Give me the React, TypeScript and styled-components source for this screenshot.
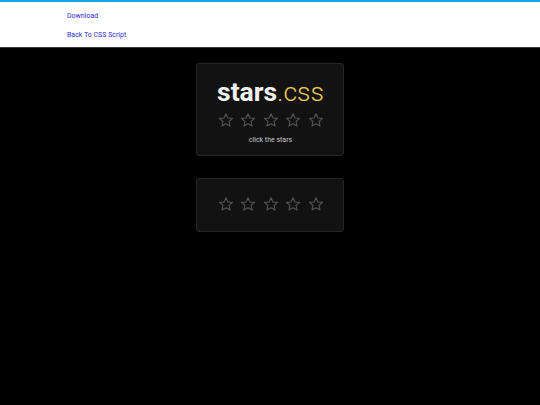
import React from "react";
import styled, { createGlobalStyle } from "styled-components";

const Global = createGlobalStyle`
  html, body { margin: 0; padding: 0; background: #000; }
  body { font-family: Roboto, "Liberation Sans", sans-serif; }
`;

const Header = styled.header`
  background: #fff;
  border-top: 2px solid #1fa1e6;
  border-bottom: 1px solid #3a3a3a;
  height: 45px;
  padding-left: 67px;
  box-sizing: content-box;
  display: flex;
  flex-direction: column;
`;

const NavLink = styled.a`
  font-size: 7px;
  color: #2b2bd6;
  text-decoration: none;
  line-height: 19px;
  display: block;
  &:first-child { margin-top: 5px; }
`;

const Main = styled.main`
  display: flex;
  flex-direction: column;
  align-items: center;
  padding-top: 15px;
  gap: 22px;
`;

const Card = styled.div<{ $h: number; $pt: number }>`
  width: 148px;
  height: ${(p) => p.$h}px;
  padding-top: ${(p) => p.$pt}px;
  padding-left: 1px;
  box-sizing: border-box;
  background: #121212;
  border: 1px solid #262626;
  border-radius: 3px;
  display: flex;
  flex-direction: column;
  align-items: center;
`;

const Title = styled.h1`
  margin: 0;
  font-size: 26.5px;
  line-height: 30px;
  font-weight: 700;
  color: #f2f2f2;
`;

const Ext = styled.span`
  font-weight: 300;
  color: #ebcb55;
`;

const StarRow = styled.div<{ $mt: number }>`
  display: flex;
  gap: 6.5px;
  margin-top: ${(p) => p.$mt}px;
`;

const StarIcon = styled.svg`
  width: 16px;
  height: 16px;
  display: block;
`;

const Caption = styled.p`
  margin: 7px 0 0;
  font-size: 7px;
  color: #c8c8c8;
  line-height: 10px;
`;

const Star = () => (
  <StarIcon viewBox="0 0 24 24">
    <path
      d="M12 2.6l2.9 6.3 6.9.7-5.2 4.6 1.5 6.8L12 17.5 5.9 21l1.5-6.8L2.2 9.6l6.9-.7z"
      fill="none"
      stroke="#565656"
      strokeWidth="1.6"
      strokeLinejoin="round"
    />
  </StarIcon>
);

const Stars = ({ mt }: { mt: number }) => (
  <StarRow $mt={mt}>
    {[0, 1, 2, 3, 4].map((i) => (
      <Star key={i} />
    ))}
  </StarRow>
);

export default function App() {
  return (
    <>
      <Global />
      <Header>
        <NavLink href="#">Download</NavLink>
        <NavLink href="#">Back To CSS Script</NavLink>
      </Header>
      <Main>
        <Card $h={93} $pt={13}>
          <Title>
            stars<Ext>.css</Ext>
          </Title>
          <Stars mt={5} />
          <Caption>click the stars</Caption>
        </Card>
        <Card $h={54} $pt={17}>
          <Stars mt={0} />
        </Card>
      </Main>
    </>
  );
}
